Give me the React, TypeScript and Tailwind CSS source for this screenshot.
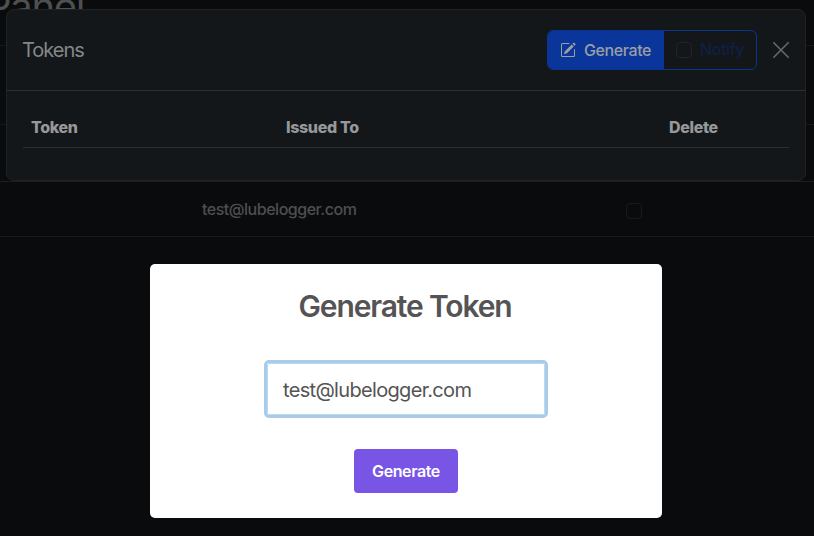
import { BsPencilSquare } from "react-icons/bs";

function AdminPage() {
  return (
    <div className="h-full w-full overflow-hidden bg-[#090b0d] text-[#4d4f50]">
      <div className="flex h-[46px] items-start border-b border-[#17191b]">
        <h1 className="-ml-[14px] -mt-[17px] whitespace-nowrap text-[40px] leading-[48px] tracking-[-1.3px]">Panel</h1>
      </div>
      <div className="h-[79px] border-b border-[#17191b]" />
      <div className="h-[57px] border-b border-[#1c1e20]" />
      <div className="flex h-[55px] items-center border-b border-[#17191b]">
        <span className="ml-[202px] w-[424px] text-base font-medium tracking-[-0.48px]">test@lubelogger.com</span>
        <span className="mt-1 h-4 w-4 rounded border border-[#181a1c]" />
      </div>
    </div>
  );
}

function TokensModal() {
  return (
    <section className="absolute left-[6px] top-[9px] h-[172px] w-[800px] rounded-lg border border-[#202325] bg-[#131719]">
      <header className="flex h-[81px] items-center border-b border-[#2c3033] pl-4 pr-4">
        <h5 className="-ml-px flex-1 text-xl tracking-[-1px] text-[#858889]">Tokens</h5>
        <div className="flex h-10 w-[210px] overflow-hidden rounded-md border border-[#0b348f] text-base">
          <button className="flex w-[116px] items-center bg-[#0a369b] pl-[12px] font-medium tracking-[-0.4px] text-[#9b9fa4]">
            <BsPencilSquare className="mr-2 h-4 w-4" />
            Generate
          </button>
          <label className="flex items-center pl-[12px] text-[#101f45]">
            <span className="mr-2 h-4 w-4 rounded border border-[#202426]" />
            <span className="-mt-0.5 font-medium tracking-[-0.4px]">Notify</span>
          </label>
        </div>
        <button className="ml-4 h-4 w-4" aria-label="Close">
          <svg viewBox="0 0 16 16" className="h-4 w-4" fill="none" stroke="#66696a" strokeWidth="1.6" strokeLinecap="round">
            <path d="M.8.8l14.4 14.4M15.2.8L.8 15.2" />
          </svg>
        </button>
      </header>
      <div className="mx-4 mt-4 flex h-[41px] items-center border-b border-[#2c3033] text-base font-extrabold tracking-[-0.35px] text-[#979899]">
        <span className="w-[255px] pl-2">Token</span>
        <span className="w-[383px] pl-2">Issued To</span>
        <span className="pl-2">Delete</span>
      </div>
    </section>
  );
}

function GenerateDialog() {
  return (
    <section className="absolute left-[150px] top-[264px] flex h-[254px] w-[512px] flex-col items-center rounded-[5px] bg-white">
      <h2 className="mr-[2px] mt-[24px] text-[30px] font-semibold leading-[36px] tracking-[-1.15px] text-[#545454]">Generate Token</h2>
      <div className="mt-[36px] flex h-[58px] w-[284px] items-center rounded-[5px] border-[3px] border-[#abc9e8] bg-white">
        <div className="flex h-full w-full items-center rounded-[2px] border border-[#b4dcf2] pl-[15px] pt-[2px] text-xl tracking-[-0.67px] text-[#545454]">
          test@lubelogger.com
        </div>
      </div>
      <button className="mt-[31px] h-11 w-[104px] rounded-[4px] bg-[#7855e4] text-base font-semibold tracking-[-0.4px] text-white">
        Generate
      </button>
    </section>
  );
}

export default function App() {
  return (
    <main className="relative h-[536px] w-[814px] overflow-hidden font-['Inter','Liberation_Sans',sans-serif]">
      <AdminPage />
      <TokensModal />
      <GenerateDialog />
    </main>
  );
}
